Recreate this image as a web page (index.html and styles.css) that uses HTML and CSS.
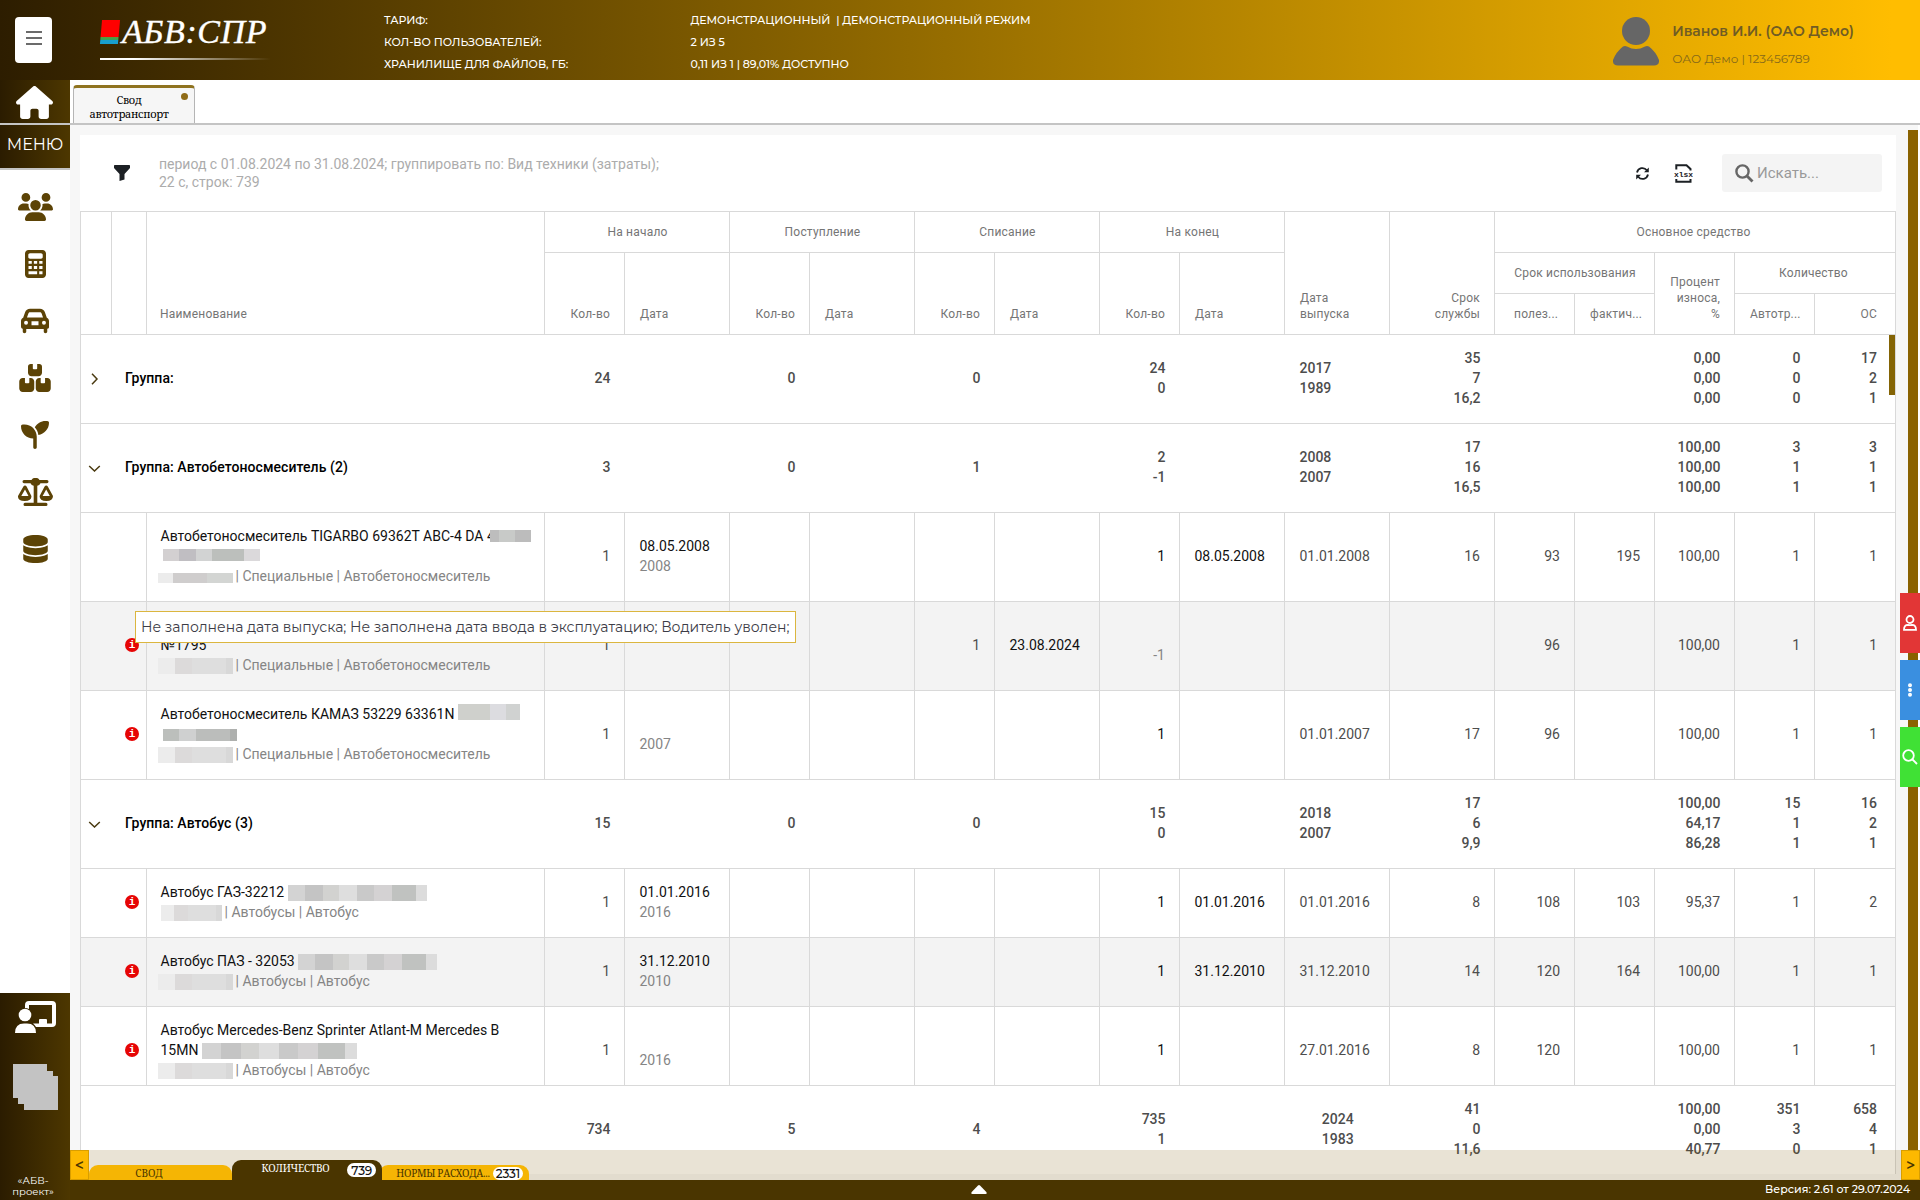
FILE: index.html
```html
<!DOCTYPE html>
<html lang="ru">
<head>
    <meta charset="UTF-8">
    <meta name="viewport" content="width=device-width, initial-scale=1.0">
    <title>Свод автотранспорт</title>
    <link rel="stylesheet" href="styles.css">
</head>
<body>
    <header class="header">
        <button class="burger" type="button"><span></span><span></span><span></span></button>
        <div class="logo">
            <div class="logo-row"><i class="logo-mark"></i><span class="logo-text">АБВ:СПР</span></div>
        </div>
        <dl class="tariff">
            <dt>ТАРИФ:</dt><dd>ДЕМОНСТРАЦИОННЫЙ &nbsp;| ДЕМОНСТРАЦИОННЫЙ РЕЖИМ</dd>
            <dt>КОЛ-ВО ПОЛЬЗОВАТЕЛЕЙ:</dt><dd>2 ИЗ 5</dd>
            <dt>ХРАНИЛИЩЕ ДЛЯ ФАЙЛОВ, ГБ:</dt><dd>0,11 ИЗ 1 | 89,01% ДОСТУПНО</dd>
        </dl>
        <div class="user">
            <svg class="avatar" viewBox="0 0 46 49"><circle cx="23" cy="14" r="14"/><path d="M10 29.5Q12 28.500 14 29.500Q23 34.500 32 29.500Q34 28.500 36 29.500Q43 35 46 43Q46.500 48.500 41 48.500H5Q-.5 48.500 0 43Q3 35 10 29.500z"/></svg>
            <div>
                <div class="user-name">Иванов И.И. (ОАО Демо)</div>
                <div class="user-org">ОАО Демо | 123456789</div>
            </div>
        </div>
    </header>

    <div class="layout">
        <aside class="sidebar">
            <div class="home">
                <svg width="37" height="33" viewBox="0 0 576 512"><path d="M575.8 255.500c0 18-15 32.100-32 32.100h-32l.7 160.200V472c0 22.100-17.900 40-40 40H392c-22.100 0-40-17.900-40-40V384c0-17.700-14.300-32-32-32H256c-17.700 0-32 14.300-32 32v88c0 22.100-17.900 40-40 40H104c-22.100 0-40-17.900-40-40V287.600H32c-18 0-32-14-32-32.100c0-9 3-17 10-24L266.400 8c7-7 15-8 22-8s15 2 21 7L564.800 231.500c8 7 12 15 11 24z"/></svg>
            </div>
            <div class="menu-title">МЕНЮ</div>
            <nav class="menu">
                <svg width="35" height="28" viewBox="0 0 640 512"><path d="M144 0a80 80 0 1 1 0 160A80 80 0 1 1 144 0zM512 0a80 80 0 1 1 0 160A80 80 0 1 1 512 0zM0 298.700C0 239.800 47.800 192 106.700 192h42.700c15.900 0 31 3.500 44.600 9.700c-1.300 7.200-1.900 14.700-1.900 22.300c0 38.200 16.800 72.500 43.300 96H21.300C9.600 320 0 310.400 0 298.700zM405.300 320c26.600-23.500 43.300-57.800 43.300-96c0-7.600-.7-15-1.900-22.300c13.600-6.300 28.700-9.700 44.600-9.700h42.700C592.200 192 640 239.800 640 298.700c0 11.800-9.600 21.300-21.300 21.300H405.300zM224 224a96 96 0 1 1 192 0 96 96 0 1 1 -192 0zM128 485.300C128 411.700 187.700 352 261.300 352H378.700C452.300 352 512 411.700 512 485.300c0 14.700-11.900 26.700-26.700 26.700H154.700c-14.700 0-26.700-11.900-26.700-26.700z"/></svg>
                <svg width="21" height="28" viewBox="0 0 384 512"><path fill-rule="evenodd" d="M64 0C28.700 0 0 28.700 0 64V448c0 35.300 28.700 64 64 64H320c35.300 0 64-28.700 64-64V64c0-35.300-28.700-64-64-64H64zM92 60H292c18 0 32 14 32 32v36c0 18-14 32-32 32H92c-18 0-32-14-32-32V92c0-18 14-32 32-32zM64 200h60v52H64zM162 200h60v52H162zM260 200h60v52H260zM64 294h60v52H64zM162 294h60v52H162zM260 294h60v52H260zM64 390h158v54H64zM260 390h60v54H260z"/></svg>
                <svg width="28" height="28" viewBox="0 0 512 512"><path fill-rule="evenodd" d="M135.200 117.400L109.100 192H402.900l-26.100-74.600C372.300 104.600 360.200 96 346.600 96H165.400c-13.600 0-25.700 8.600-30.200 21.400zM39.600 196.800L74.800 96.300C88.300 57.800 124.600 32 165.400 32H346.600c40.800 0 77.100 25.800 90.600 64.300l35.200 100.500c23.200 9.600 39.600 32.500 39.600 59.200V350c0 30 0 40-32 46v52c0 17.700-14.300 32-32 32s-32-14.300-32-32V400H96v48c0 17.700-14.300 32-32 32s-32-14.300-32-32V396C10 390 0 380 0 350V256c0-26.700 16.400-49.600 39.600-59.200zM128 288a36 36 0 1 0 -72 0 36 36 0 1 0 72 0zm292 36a36 36 0 1 0 0-72 36 36 0 1 0 0 72zM192 262v70h128v-70z"/></svg>
                <svg width="32" height="28" viewBox="0 0 576 512"><path d="M248 0H208c-26.500 0-48 21.500-48 48V160c0 35.300 28.700 64 64 64H352c35.300 0 64-28.700 64-64V48c0-26.500-21.500-48-48-48H328V80c0 8.800-7.200 16-16 16H264c-8.800 0-16-7.200-16-16V0zM64 256c-35.300 0-64 28.700-64 64V448c0 35.300 28.700 64 64 64H210c35.300 0 64-28.700 64-64V320c0-35.300-28.700-64-64-64H184v80c0 8.800-7.200 16-16 16H120c-8.800 0-16-7.200-16-16V256H64zM366 512H512c35.300 0 64-28.700 64-64V320c0-35.300-28.700-64-64-64H472v80c0 8.800-7.200 16-16 16H408c-8.800 0-16-7.200-16-16V256H366c-35.300 0-64 28.700-64 64V448c0 35.300 28.700 64 64 64z"/></svg>
                <svg width="28" height="28" viewBox="0 0 512 512"><path d="M512 32c0 113.600-84.600 207.500-194.200 222c-7.100-53.400-30.600-101.600-65.300-139.300C290.800 46.300 364 0 448 0h32c17.700 0 32 14.300 32 32zM0 96C0 78.300 14.300 64 32 64H64c123.700 0 224 100.300 224 224V480c0 17.700-14.300 32-32 32s-32-14.300-32-32V320C100.300 320 0 219.700 0 96z"/></svg>
                <svg width="35" height="28" viewBox="0 0 35 28"><path d="M6 2h7.500a4.300 3.500 0 0 1 8 0H29q1.500 0 1.500 1.600T29 5.200h-6.500a4.500 4.500 0 0 1-3.200 2.600V24.800H28q1.500 0 1.500 1.600T28 28H7q-1.500 0-1.500-1.600T7 24.800h8.700V7.800a4.500 4.500 0 0 1-3.200-2.600H6Q4.500 5.200 4.500 3.600T6 2z"/><path fill-rule="evenodd" d="M7 7.500q1 0 1.600 1L13.400 18q.4 5-6.700 5T0 18L5.400 8.500Q6 7.500 7 7.500zM7 11.500L3.300 18h7.200zM28.200 7.500q1 0 1.600 1L35 18q0 5-6.700 5t-6.700-5l5-9.500q.6-1 1.600-1zM28.200 11.500L24.600 18h7.200z"/></svg>
                <svg width="25" height="28" viewBox="0 0 448 512"><path d="M448 80v48c0 44.200-100.300 80-224 80S0 172.200 0 128V80C0 35.800 100.300 0 224 0S448 35.800 448 80zM393.200 214.700c20.800-7.400 39.900-16.900 54.800-28.600V288c0 44.200-100.300 80-224 80S0 332.200 0 288V186.100c14.900 11.800 34 21.200 54.800 28.600C99.700 230.700 159.500 240 224 240s124.300-9.300 169.200-25.300zM0 346.100c14.900 11.800 34 21.200 54.800 28.600C99.700 390.700 159.500 400 224 400s124.300-9.300 169.200-25.300c20.800-7.400 39.900-16.900 54.800-28.600V432c0 44.200-100.300 80-224 80S0 476.200 0 432V346.100z"/></svg>
            </nav>
            <div class="sidebar-bottom">
                <svg class="teacher" width="41" height="32" viewBox="0 0 41 32"><path d="M10 7V4q0-4 4-4h23q4 0 4 4v18q0 4-4 4H21q-1-2-3-3.500h6V19q0-1 1-1h6q1 0 1 1v3.500h5V4H14v4q-2-1-4-1z"/><circle cx="10" cy="14" r="6.300"/><path d="M0 32q0-9.500 9-9.500h3q9 0 9 9.500z"/></svg>
                <svg class="stack" width="45" height="46" viewBox="0 0 45 46"><path d="M0 0H34V7H40V12H45V46H11V40H5V34H0z"/></svg>
                <div class="company">«АБВ-<br>проект»</div>
            </div>
        </aside>

        <div class="content">
            <div class="tabs">
                <div class="tab">Свод<br>автотранспорт<i class="tab-dot"></i></div>
            </div>

            <main class="workspace">
                <section class="card">
                    <div class="toolbar">
                        <svg class="funnel" width="16" height="16" viewBox="0 0 16 16"><path d="M0 .8Q0 0 .8 0H15.200Q16 0 16 .8V3L10.500 9V14.500L5.500 16V9L0 3z"/></svg>
                        <div class="filter-text">период с 01.08.2024 по 31.08.2024; группировать по: Вид техники (затраты);<br>22 с, строк: 739</div>
                        <svg class="refresh" width="13" height="13" viewBox="0 0 13 13"><path d="M1 5.500A5.500 5.500 0 0 1 10.800 3.300M12 7.500A5.500 5.500 0 0 1 2.200 9.700" fill="none" stroke="#1c2024" stroke-width="1.800"/><path d="M12.800 .5V5.300H8zM.2 12.500V7.700H5z"/></svg>
                        <svg class="xlsx" width="19" height="19" viewBox="0 0 19 19"><path d="M2.300 5.500V1.300H12.500L16.500 5V6.500M2.300 15V17.700H16.500V15" fill="none" stroke="#1c2024" stroke-width="2"/><text x="9.500" y="12.800" text-anchor="middle">xlsx</text></svg>
                        <label class="search">
                            <svg width="19" height="19" viewBox="0 0 19 19"><circle cx="7.500" cy="7.500" r="6.100" fill="none" stroke="#666" stroke-width="2.400"/><path d="M12 12L17.500 17.500" stroke="#666" stroke-width="2.800"/></svg>
                            <input type="text" placeholder="Искать...">
                        </label>
                    </div>

                    <div class="grid">
                        <div class="grid-head">
                            <div class="hc tall"></div>
                            <div class="hc tall"></div>
                            <div class="hc tall">Наименование</div>
                            <div class="hc pair">На начало</div>
                            <div class="hc pair">Поступление</div>
                            <div class="hc pair">Списание</div>
                            <div class="hc pair">На конец</div>
                            <div class="hc tall">Дата<br>выпуска</div>
                            <div class="hc tall num">Срок<br>службы</div>
                            <div class="hc all-os">Основное средство</div>
                            <div class="hc sub c4 num">Кол-во</div>
                            <div class="hc sub c5">Дата</div>
                            <div class="hc sub c6 num">Кол-во</div>
                            <div class="hc sub c7">Дата</div>
                            <div class="hc sub c8 num">Кол-во</div>
                            <div class="hc sub c9">Дата</div>
                            <div class="hc sub c10 num">Кол-во</div>
                            <div class="hc sub c11">Дата</div>
                            <div class="hc mid c14">Срок использования</div>
                            <div class="hc sub c16 num">Процент<br>износа,<br>%</div>
                            <div class="hc mid c17">Количество</div>
                            <div class="hc low c14 cut">полез...</div>
                            <div class="hc low c15">фактич...</div>
                            <div class="hc low c17">Автотр...</div>
                            <div class="hc low c18 num">ОС</div>
                        </div>

                        <div class="grid-body">
                            <div class="row group">
                                <div class="c arrow"><svg width="7" height="12" viewBox="0 0 7 12"><path d="M1 .7L6 6L1 11.300"/></svg></div>
                                <div class="c title">Группа:</div>
                                <div class="c num">24</div><div class="c"></div>
                                <div class="c num">0</div><div class="c"></div>
                                <div class="c num">0</div><div class="c"></div>
                                <div class="c num">24<br>0</div><div class="c"></div>
                                <div class="c">2017<br>1989</div>
                                <div class="c num">35<br>7<br>16,2</div>
                                <div class="c"></div><div class="c"></div>
                                <div class="c num">0,00<br>0,00<br>0,00</div>
                                <div class="c num">0<br>0<br>0</div>
                                <div class="c num">17<br>2<br>1</div>
                            </div>
                            <div class="row group">
                                <div class="c arrow"><svg width="12" height="7" viewBox="0 0 12 7"><path d="M.7 1L6 6L11.300 1"/></svg></div>
                                <div class="c title">Группа: Автобетоносмеситель (2)</div>
                                <div class="c num">3</div><div class="c"></div>
                                <div class="c num">0</div><div class="c"></div>
                                <div class="c num">1</div><div class="c"></div>
                                <div class="c num">2<br>-1</div><div class="c"></div>
                                <div class="c">2008<br>2007</div>
                                <div class="c num">17<br>16<br>16,5</div>
                                <div class="c"></div><div class="c"></div>
                                <div class="c num">100,00<br>100,00<br>100,00</div>
                                <div class="c num">3<br>1<br>1</div>
                                <div class="c num">3<br>1<br>1</div>
                            </div>
                            <div class="row">
                                <div class="c warn"></div>
                                <div class="c name"><div>Автобетоносмеситель TIGARBO 69362T АВС-4 DA 4<i class="px px-s"></i></div><div><i class="px px-l"></i></div><div class="sub-line"><i class="px px-who low"></i>| Специальные | Автобетоносмеситель</div></div>
                                <div class="c num">1</div>
                                <div class="c dark"><div>08.05.2008</div><div class="sub-line">2008</div></div>
                                <div class="c"></div><div class="c"></div><div class="c"></div><div class="c"></div>
                                <div class="c num dark">1</div>
                                <div class="c dark">08.05.2008</div>
                                <div class="c">01.01.2008</div>
                                <div class="c num">16</div>
                                <div class="c num">93</div>
                                <div class="c num">195</div>
                                <div class="c num">100,00</div>
                                <div class="c num">1</div>
                                <div class="c num">1</div>
                            </div>
                            <div class="row odd">
                                <div class="c warn"><b class="info">i</b></div>
                                <div class="c name"><div>&nbsp;</div><div>№1795</div><div class="sub-line"><i class="px px-who"></i>| Специальные | Автобетоносмеситель</div></div>
                                <div class="c num">1</div><div class="c"></div>
                                <div class="c"></div><div class="c"></div>
                                <div class="c num">1</div>
                                <div class="c dark">23.08.2024</div>
                                <div class="c num"><div>&nbsp;</div><div class="sub-line">-1</div></div>
                                <div class="c"></div><div class="c"></div><div class="c"></div>
                                <div class="c num">96</div>
                                <div class="c"></div>
                                <div class="c num">100,00</div>
                                <div class="c num">1</div>
                                <div class="c num">1</div>
                            </div>
                            <div class="row">
                                <div class="c warn"><b class="info">i</b></div>
                                <div class="c name"><div>Автобетоносмеситель КАМАЗ 53229 63361N <i class="px px-m"></i></div><div><i class="px px-n"></i></div><div class="sub-line"><i class="px px-who"></i>| Специальные | Автобетоносмеситель</div></div>
                                <div class="c num">1</div>
                                <div class="c"><div>&nbsp;</div><div class="sub-line">2007</div></div>
                                <div class="c"></div><div class="c"></div><div class="c"></div><div class="c"></div>
                                <div class="c num dark">1</div><div class="c"></div>
                                <div class="c">01.01.2007</div>
                                <div class="c num">17</div>
                                <div class="c num">96</div>
                                <div class="c"></div>
                                <div class="c num">100,00</div>
                                <div class="c num">1</div>
                                <div class="c num">1</div>
                            </div>
                            <div class="row group">
                                <div class="c arrow"><svg width="12" height="7" viewBox="0 0 12 7"><path d="M.7 1L6 6L11.300 1"/></svg></div>
                                <div class="c title">Группа: Автобус (3)</div>
                                <div class="c num">15</div><div class="c"></div>
                                <div class="c num">0</div><div class="c"></div>
                                <div class="c num">0</div><div class="c"></div>
                                <div class="c num">15<br>0</div><div class="c"></div>
                                <div class="c">2018<br>2007</div>
                                <div class="c num">17<br>6<br>9,9</div>
                                <div class="c"></div><div class="c"></div>
                                <div class="c num">100,00<br>64,17<br>86,28</div>
                                <div class="c num">15<br>1<br>1</div>
                                <div class="c num">16<br>2<br>1</div>
                            </div>
                            <div class="row short">
                                <div class="c warn"><b class="info">i</b></div>
                                <div class="c name"><div>Автобус ГАЗ-32212 <i class="px px-xl"></i></div><div class="sub-line"><i class="px px-who narrow"></i>| Автобусы | Автобус</div></div>
                                <div class="c num">1</div>
                                <div class="c dark"><div>01.01.2016</div><div class="sub-line">2016</div></div>
                                <div class="c"></div><div class="c"></div><div class="c"></div><div class="c"></div>
                                <div class="c num dark">1</div>
                                <div class="c dark">01.01.2016</div>
                                <div class="c">01.01.2016</div>
                                <div class="c num">8</div>
                                <div class="c num">108</div>
                                <div class="c num">103</div>
                                <div class="c num">95,37</div>
                                <div class="c num">1</div>
                                <div class="c num">2</div>
                            </div>
                            <div class="row short odd">
                                <div class="c warn"><b class="info">i</b></div>
                                <div class="c name"><div>Автобус ПАЗ - 32053 <i class="px px-xl"></i></div><div class="sub-line"><i class="px px-who"></i>| Автобусы | Автобус</div></div>
                                <div class="c num">1</div>
                                <div class="c dark"><div>31.12.2010</div><div class="sub-line">2010</div></div>
                                <div class="c"></div><div class="c"></div><div class="c"></div><div class="c"></div>
                                <div class="c num dark">1</div>
                                <div class="c dark">31.12.2010</div>
                                <div class="c">31.12.2010</div>
                                <div class="c num">14</div>
                                <div class="c num">120</div>
                                <div class="c num">164</div>
                                <div class="c num">100,00</div>
                                <div class="c num">1</div>
                                <div class="c num">1</div>
                            </div>
                            <div class="row">
                                <div class="c warn"><b class="info">i</b></div>
                                <div class="c name"><div>Автобус Mercedes-Benz Sprinter Atlant-M Mercedes B</div><div>15MN <i class="px px-xxl"></i></div><div class="sub-line"><i class="px px-who"></i>| Автобусы | Автобус</div></div>
                                <div class="c num">1</div>
                                <div class="c"><div>&nbsp;</div><div class="sub-line">2016</div></div>
                                <div class="c"></div><div class="c"></div><div class="c"></div><div class="c"></div>
                                <div class="c num dark">1</div><div class="c"></div>
                                <div class="c">27.01.2016</div>
                                <div class="c num">8</div>
                                <div class="c num">120</div>
                                <div class="c"></div>
                                <div class="c num">100,00</div>
                                <div class="c num">1</div>
                                <div class="c num">1</div>
                            </div>
                            <i class="thumb"></i>
                            <div class="tooltip">Не заполнена дата выпуска; Не заполнена дата ввода в эксплуатацию; Водитель уволен;</div>
                        </div>

                        <div class="row group total">
                            <div class="c"></div><div class="c title"></div>
                            <div class="c num">734</div><div class="c"></div>
                            <div class="c num">5</div><div class="c"></div>
                            <div class="c num">4</div><div class="c"></div>
                            <div class="c num">735<br>1</div><div class="c"></div>
                            <div class="c center">2024<br>1983</div>
                            <div class="c num">41<br>0<br>11,6</div>
                            <div class="c"></div><div class="c"></div>
                            <div class="c num">100,00<br>0,00<br>40,77</div>
                            <div class="c num">351<br>3<br>0</div>
                            <div class="c num">658<br>4<br>1</div>
                        </div>
                    </div>
                </section>
                <div class="page-scroll"></div>

                <div class="sheet-tabs">
                    <button class="nav-btn" type="button">&lt;</button>
                    <div class="sheet">СВОД</div>
                    <div class="sheet active">КОЛИЧЕСТВО<span class="badge">739</span></div>
                    <div class="sheet third">НОРМЫ РАСХОДА...<span class="badge">2331</span></div>
                    <button class="nav-btn next" type="button">&gt;</button>
                </div>
            </main>

            <footer class="status">
                <svg width="16" height="9" viewBox="0 0 16 9"><path d="M7 .6Q8-.4 9 .6L15.300 7Q16.500 9 14.500 9H1.500Q-.5 9 .7 7z"/></svg>
                <span>Версия: 2.61 от 29.07.2024</span>
            </footer>
        </div>
    </div>

    <div class="side-actions">
        <button class="act red" type="button"><svg width="14" height="16" viewBox="0 0 14 16"><circle cx="7" cy="4.500" r="3.500"/><path d="M1 14.800q0-5 4-5 2 .8 4 0 4 0 4 5z"/></svg></button>
        <button class="act blue" type="button"><svg width="4" height="14" viewBox="0 0 4 14"><circle cx="2" cy="2.200" r="1.100"/><circle cx="2" cy="7" r="1.100"/><circle cx="2" cy="11.800" r="1.100"/></svg></button>
        <button class="act green" type="button"><svg width="16" height="16" viewBox="0 0 16 16"><circle cx="6.500" cy="6.500" r="5.300"/><path d="M10.500 10.500L15 15"/></svg></button>
    </div>
</body>
</html>
```
FILE: styles.css
```css
* {
    box-sizing: border-box;
}
body {
    margin: 0;
    height: 1200px;
    overflow: hidden;
    display: flex;
    flex-direction: column;
    font-family: Roboto, sans-serif;
    font-size: 14px;
    color: #4d4d4d;
    background-color: #fff;
    position: relative;
}
button {
    border: none;
    padding: 0;
    font-family: inherit;
}
svg {
    display: block;
    flex: none;
}

/* header */
.header {
    height: 80px;
    flex: none;
    display: flex;
    align-items: flex-start;
    background: linear-gradient(90deg, #2d1d00, #ffbd00 98.5%);
    font-family: Montserrat, Inter, sans-serif;
    color: #fff;
}
.burger {
    width: 37px;
    height: 46px;
    margin: 17px 0 0 15px;
    border-radius: 4px;
    background-color: #fff;
    display: flex;
    flex-direction: column;
    align-items: center;
    justify-content: center;
    gap: 4px;
    padding-bottom: 4px;
}
.burger span {
    width: 16px;
    height: 2px;
    background-color: #6b6b6b;
}
.logo {
    width: 170px;
    height: 60px;
    margin-left: 48px;
    border-bottom: 2px solid;
    border-image: linear-gradient(90deg, #fff 20%, transparent) 1;
}
.logo-row {
    display: flex;
    align-items: center;
    height: 64px;
}
.logo-mark {
    width: 18px;
    height: 24px;
    margin: 0 3px 0 1px;
    transform: skewX(-5deg);
    background: linear-gradient(#f00 72%, #5a9a3a 72%, #2aa860 84%, #18a0d0 84%);
}
.logo-text {
    font: italic 34px/64px "Liberation Serif", serif;
    letter-spacing: 0.6px;
    -webkit-text-stroke: 0.4px #fff;
}
.tariff {
    display: grid;
    grid-template-columns: 306.500px 1fr;
    margin: 9px 0 0 114px;
    font-size: 11px;
    line-height: 22px;
    font-weight: 500;
    letter-spacing: -0.05px;
}
.tariff dd {
    margin: 0;
}
.user {
    display: flex;
    gap: 13px;
    margin: 17px 66px 0 auto;
}
.avatar {
    width: 46px;
    height: 49px;
    fill: #666;
}
.user-name {
    margin-top: 4px;
    font-size: 14px;
    font-weight: 600;
    line-height: 20px;
    color: #705c24;
}
.user-org {
    margin-top: 9px;
    font-size: 12px;
    line-height: 18px;
    color: #86691a;
}

/* sidebar */
.layout {
    flex: 1;
    display: flex;
    min-height: 0;
}
.sidebar {
    width: 70px;
    display: flex;
    flex-direction: column;
    font-family: Montserrat, Inter, sans-serif;
    color: #fff;
}
.home,
.menu-title,
.sidebar-bottom {
    background: linear-gradient(90deg, #2b1c00, #4d3700);
}
.home {
    height: 45px;
    padding: 6px 0 0 16px;
    border-bottom: 2px solid #c4c4c4;
    fill: #fff;
}
.menu-title {
    height: 45px;
    border-bottom: 2px solid #c4c4c4;
    text-align: center;
    font-size: 16px;
    line-height: 39px;
}
.menu {
    display: flex;
    flex-direction: column;
    align-items: center;
    gap: 29px;
    padding-top: 23px;
    fill: #5c4306;
}
.sidebar-bottom {
    margin-top: auto;
    height: 207px;
    padding-top: 8px;
    fill: #fff;
}
.teacher {
    margin-left: 15px;
}
.stack {
    margin: 31px 0 0 13px;
    fill: #c3c3c3;
}
.company {
    width: 66px;
    margin-top: 65px;
    text-align: center;
    font-size: 10px;
    line-height: 11px;
}

/* page tabs */
.content {
    flex: 1;
    display: flex;
    flex-direction: column;
    min-width: 0;
}
.tabs {
    height: 45px;
    flex: none;
    padding: 5px 0 0 3px;
    border-bottom: 2px solid #c4c4c4;
}
.tab {
    position: relative;
    width: 122px;
    height: 38px;
    padding: 5px 10px 0 0;
    border: 1px solid #b5b5b5;
    border-top: 3px solid #8f7320;
    border-bottom: none;
    border-radius: 4px 4px 0 0;
    background-color: #f6f6f6;
    color: #000;
    text-align: center;
    font: 11px/13.5px "Noto Serif", "Liberation Serif", serif;
    letter-spacing: -0.3px;
}
.tab-dot {
    position: absolute;
    top: 5px;
    right: 6px;
    width: 7px;
    height: 7px;
    border-radius: 50%;
    background-color: #8f6b16;
}

/* workspace */
.workspace {
    position: relative;
    height: 1055px;
    flex: none;
    display: flex;
    align-items: flex-start;
    padding: 10px 0 0 10px;
    background: linear-gradient(90deg, #f7f7f7 1848px, #fff 1848px);
}
.card {
    width: 1816px;
    height: 1039px;
    flex: none;
    background-color: #fff;
}
.page-scroll {
    width: 10px;
    height: 1050px;
    margin: -5px 0 0 12px;
    background-color: #8a6200;
}
.toolbar {
    height: 76px;
    display: flex;
    align-items: center;
    fill: #1c2024;
}
.funnel {
    margin-left: 34px;
}
.filter-text {
    margin: -1px 0 0 29px;
    font-size: 14px;
    line-height: 18px;
    color: #acacac;
}
.refresh {
    margin-left: auto;
}
.xlsx {
    margin-left: 25px;
}
.xlsx text {
    font: bold 8px "Liberation Mono", monospace;
}
.search {
    width: 160px;
    height: 38px;
    margin: 0 14px 0 29px;
    padding-left: 13px;
    border-radius: 3px;
    display: flex;
    align-items: center;
    gap: 3px;
    background-color: #f4f4f4;
}
.search input {
    width: 110px;
    border: none;
    padding: 0;
    background: none;
    font: 15px Roboto, sans-serif;
}
.search input::placeholder {
    color: #999;
}

/* data grid */
.grid {
    border: 1px solid #d9d9d9;
    border-width: 1px 0 0 1px;
    height: 963px;
}
.grid-head {
    display: grid;
    grid-template-columns: 31px 35px 398px 80px 105px 80px 105px 80px 105px 80px 105px 105px 105px 80px 80px 80px 80px 81px;
    grid-template-rows: 41px 41px 41px;
    font-size: 12px;
    line-height: 16px;
    letter-spacing: 0.2px;
    color: #757575;
}
.hc {
    display: flex;
    align-items: flex-end;
    padding: 0 14px 12px 15px;
    border: 1px solid #d9d9d9;
    border-width: 0 1px 1px 0;
}
.hc.num {
    justify-content: flex-end;
    text-align: right;
}
.hc.tall {
    grid-row: 1 / 4;
}
.hc.tall:nth-child(3) {
    padding-left: 13px;
}
.hc.pair {
    grid-column-end: span 2;
    grid-row: 1;
    justify-content: center;
}
.hc.all-os {
    grid-column: 14 / 19;
    grid-row: 1;
    justify-content: center;
    padding-right: 18px;
}
.hc.sub {
    grid-row: 2 / 4;
}
.hc.mid {
    grid-row: 2;
    grid-column-end: span 2;
    justify-content: center;
}
.hc.mid.c17 {
    padding-right: 18px;
}
.hc.low {
    grid-row: 3;
}
.hc.cut {
    padding-left: 19px;
}
.c4 { grid-column-start: 4; }
.c5 { grid-column-start: 5; }
.c6 { grid-column-start: 6; }
.c7 { grid-column-start: 7; }
.c8 { grid-column-start: 8; }
.c9 { grid-column-start: 9; }
.c10 { grid-column-start: 10; }
.c11 { grid-column-start: 11; }
.c14 { grid-column-start: 14; }
.c15 { grid-column-start: 15; }
.c16 { grid-column-start: 16; }
.c17 { grid-column-start: 17; }
.c18 { grid-column-start: 18; }
.hc.c18 {
    padding-right: 18px;
}
.grid-body {
    position: relative;
    height: 751px;
    overflow: hidden;
    border-bottom: 1px solid #d9d9d9;
}
.row {
    height: 89px;
    display: grid;
    grid-template-columns: 66px 398px 80px 105px 80px 105px 80px 105px 80px 105px 105px 105px 80px 80px 80px 80px 81px;
    border-bottom: 1px solid #d9d9d9;
    line-height: 20px;
}
.row.short {
    height: 69px;
}
.row.odd {
    background-color: #f3f3f3;
}
.c {
    display: flex;
    flex-direction: column;
    justify-content: center;
    padding: 0 14px 2px 14.5px;
    border-right: 1px solid #d9d9d9;
    white-space: nowrap;
}
.c.num {
    text-align: right;
}
.c:last-child {
    padding-right: 18px;
}
.c.dark,
.c.name {
    color: #111;
}
.c.name {
    padding: 0 0 2px 13.5px;
}
.sub-line {
    color: #858585;
}
.group {
    font-weight: 500;
}
.group .c {
    border-right: none;
}
.row.group .c:last-child {
    border-right: 1px solid #d9d9d9;
}
.group .title {
    padding: 0 0 2px;
    margin-left: -22px;
    letter-spacing: 0.06px;
    color: #000;
}
.group .c.num {
    padding-right: 14.5px;
}
.group .c.num:last-child {
    padding-right: 18px;
}
.total {
    height: 88px;
    border-bottom: none;
}
.center {
    text-align: center;
}
.row .arrow {
    padding: 0 0 0 7px;
}
.arrow svg {
    align-self: flex-start;
    width: 13px;
    fill: none;
    stroke: #4a3a10;
    stroke-width: 1.500;
}
.warn {
    align-items: flex-end;
    padding-right: 7px;
}
.info {
    width: 14px;
    height: 14px;
    border-radius: 50%;
    background-color: #e60505;
    color: #fff;
    text-align: center;
    font: bold 11px/14px "Liberation Mono", monospace;
}

/* hidden personal data */
.px {
    display: inline-block;
    height: 16px;
    vertical-align: middle;
    background: linear-gradient(90deg, #d3d3d3 12%, #c4c4c4 12% 25%, #d2d2d0 25% 37%, #dedede 37% 50%, #c9c9c9 50% 62%, #d4d2d3 62% 75%, #c0c2c0 75% 92%, #dcdcdc 92%);
}
.px-s {
    width: 41px;
    height: 12px;
    margin: -2px 0 0 -5px;
    background: linear-gradient(90deg, #bdbdbd 22%, #c8cac8 22% 60%, #bcbcbc 60%);
}
.px-l {
    width: 97px;
    height: 12px;
    margin: -4px 0 0 2px;
    background: linear-gradient(90deg, #d3d0d1 16%, #c0bec2 16% 34%, #d2d3d3 34% 50%, #bcbfbc 50% 84%, #dbd9db 84%);
}
.px-m {
    width: 62px;
    margin-top: -7px;
    background: linear-gradient(90deg, #cfd0cc 52%, #dcdce0 52% 78%, #d0d2d1 78%);
}
.px-n {
    width: 74px;
    height: 12px;
    margin-left: 2px;
    background: linear-gradient(90deg, #bcbfbc 22%, #cfd0d0 22% 45%, #bbbdbb 45% 90%, #aeb0ae 90%);
}
.px-xl {
    width: 139px;
}
.px-xxl {
    width: 155px;
}
.px-who {
    width: 75px;
    margin: 0 3px 0 -3px;
    background: linear-gradient(90deg, #ececec 22%, #dcdada 22% 45%, #dedede 45% 90%, #d8d8d8 90%);
}
.px-who.low {
    height: 10px;
    margin-top: 2px;
    background: linear-gradient(90deg, #ececec 20%, #cfcdcd 20% 65%, #d3d5d3 65%);
}
.px-who.narrow {
    width: 61px;
    margin-left: 0;
}

.thumb {
    position: absolute;
    top: 0;
    right: 1px;
    width: 6px;
    height: 60px;
    background-color: #846405;
}
.tooltip {
    position: absolute;
    top: 276px;
    left: 54px;
    width: 661px;
    height: 32px;
    padding-left: 5px;
    border: 1px solid #dbb63f;
    background-color: #fff;
    color: #3c3c46;
    font: 14px/30px Montserrat, Inter, sans-serif;
    white-space: nowrap;
}

/* bottom sheets */
.sheet-tabs {
    position: absolute;
    left: 0;
    right: 0;
    bottom: 0;
    height: 30px;
    display: flex;
    align-items: flex-end;
    overflow: hidden;
    background-color: rgba(121, 85, 0, 0.165);
    font-family: "Noto Serif", "Liberation Serif", serif;
    font-size: 10px;
}
.nav-btn {
    width: 19px;
    height: 30px;
    border: 1px solid #d99e00;
    background-color: #fdb900;
    color: #4a3500;
    font: 500 15px/28px Inter, sans-serif;
}
.nav-btn.next {
    margin-left: auto;
}
.sheet {
    position: relative;
    width: 143px;
    height: 15px;
    padding: 1px 23px 0 0;
    border-radius: 9px 9px 0 0;
    background-color: #f5b504;
    color: #4a3500;
    text-align: center;
    line-height: 14px;
    white-space: nowrap;
}
.sheet.active {
    width: 150px;
    height: 20px;
    background-color: #4a3500;
    color: #fff;
    letter-spacing: -0.2px;
    z-index: 1;
}
.sheet.third {
    width: 150px;
    margin-left: -3px;
    padding-right: 22px;
    letter-spacing: -0.3px;
}
.badge {
    position: absolute;
    top: 3px;
    right: 6px;
    height: 14px;
    padding: 0 4px;
    border-radius: 7px;
    background-color: #fff;
    color: #111;
    font: 500 12px/15px Montserrat, Inter, sans-serif;
    letter-spacing: -0.2px;
}
.third .badge {
    top: 2px;
    height: 13px;
    padding: 0 3px;
    line-height: 14px;
}

.status {
    height: 20px;
    display: flex;
    align-items: center;
    justify-content: space-between;
    padding: 0 10px 2px 901px;
    background-color: #4a3500;
    color: #fff;
    fill: #fff;
    font: 500 11px Montserrat, Inter, sans-serif;
}

/* right edge buttons */
.side-actions {
    position: absolute;
    top: 593px;
    right: 0;
    display: flex;
    flex-direction: column;
    gap: 7px;
}
.act {
    width: 20px;
    height: 60px;
    display: flex;
    align-items: center;
    justify-content: center;
    fill: none;
    stroke: #fff;
    stroke-width: 1.800;
}
.red { background-color: #e23636; }
.blue { background-color: #3a8fe0; }
.green { background-color: #40e135; }
```
